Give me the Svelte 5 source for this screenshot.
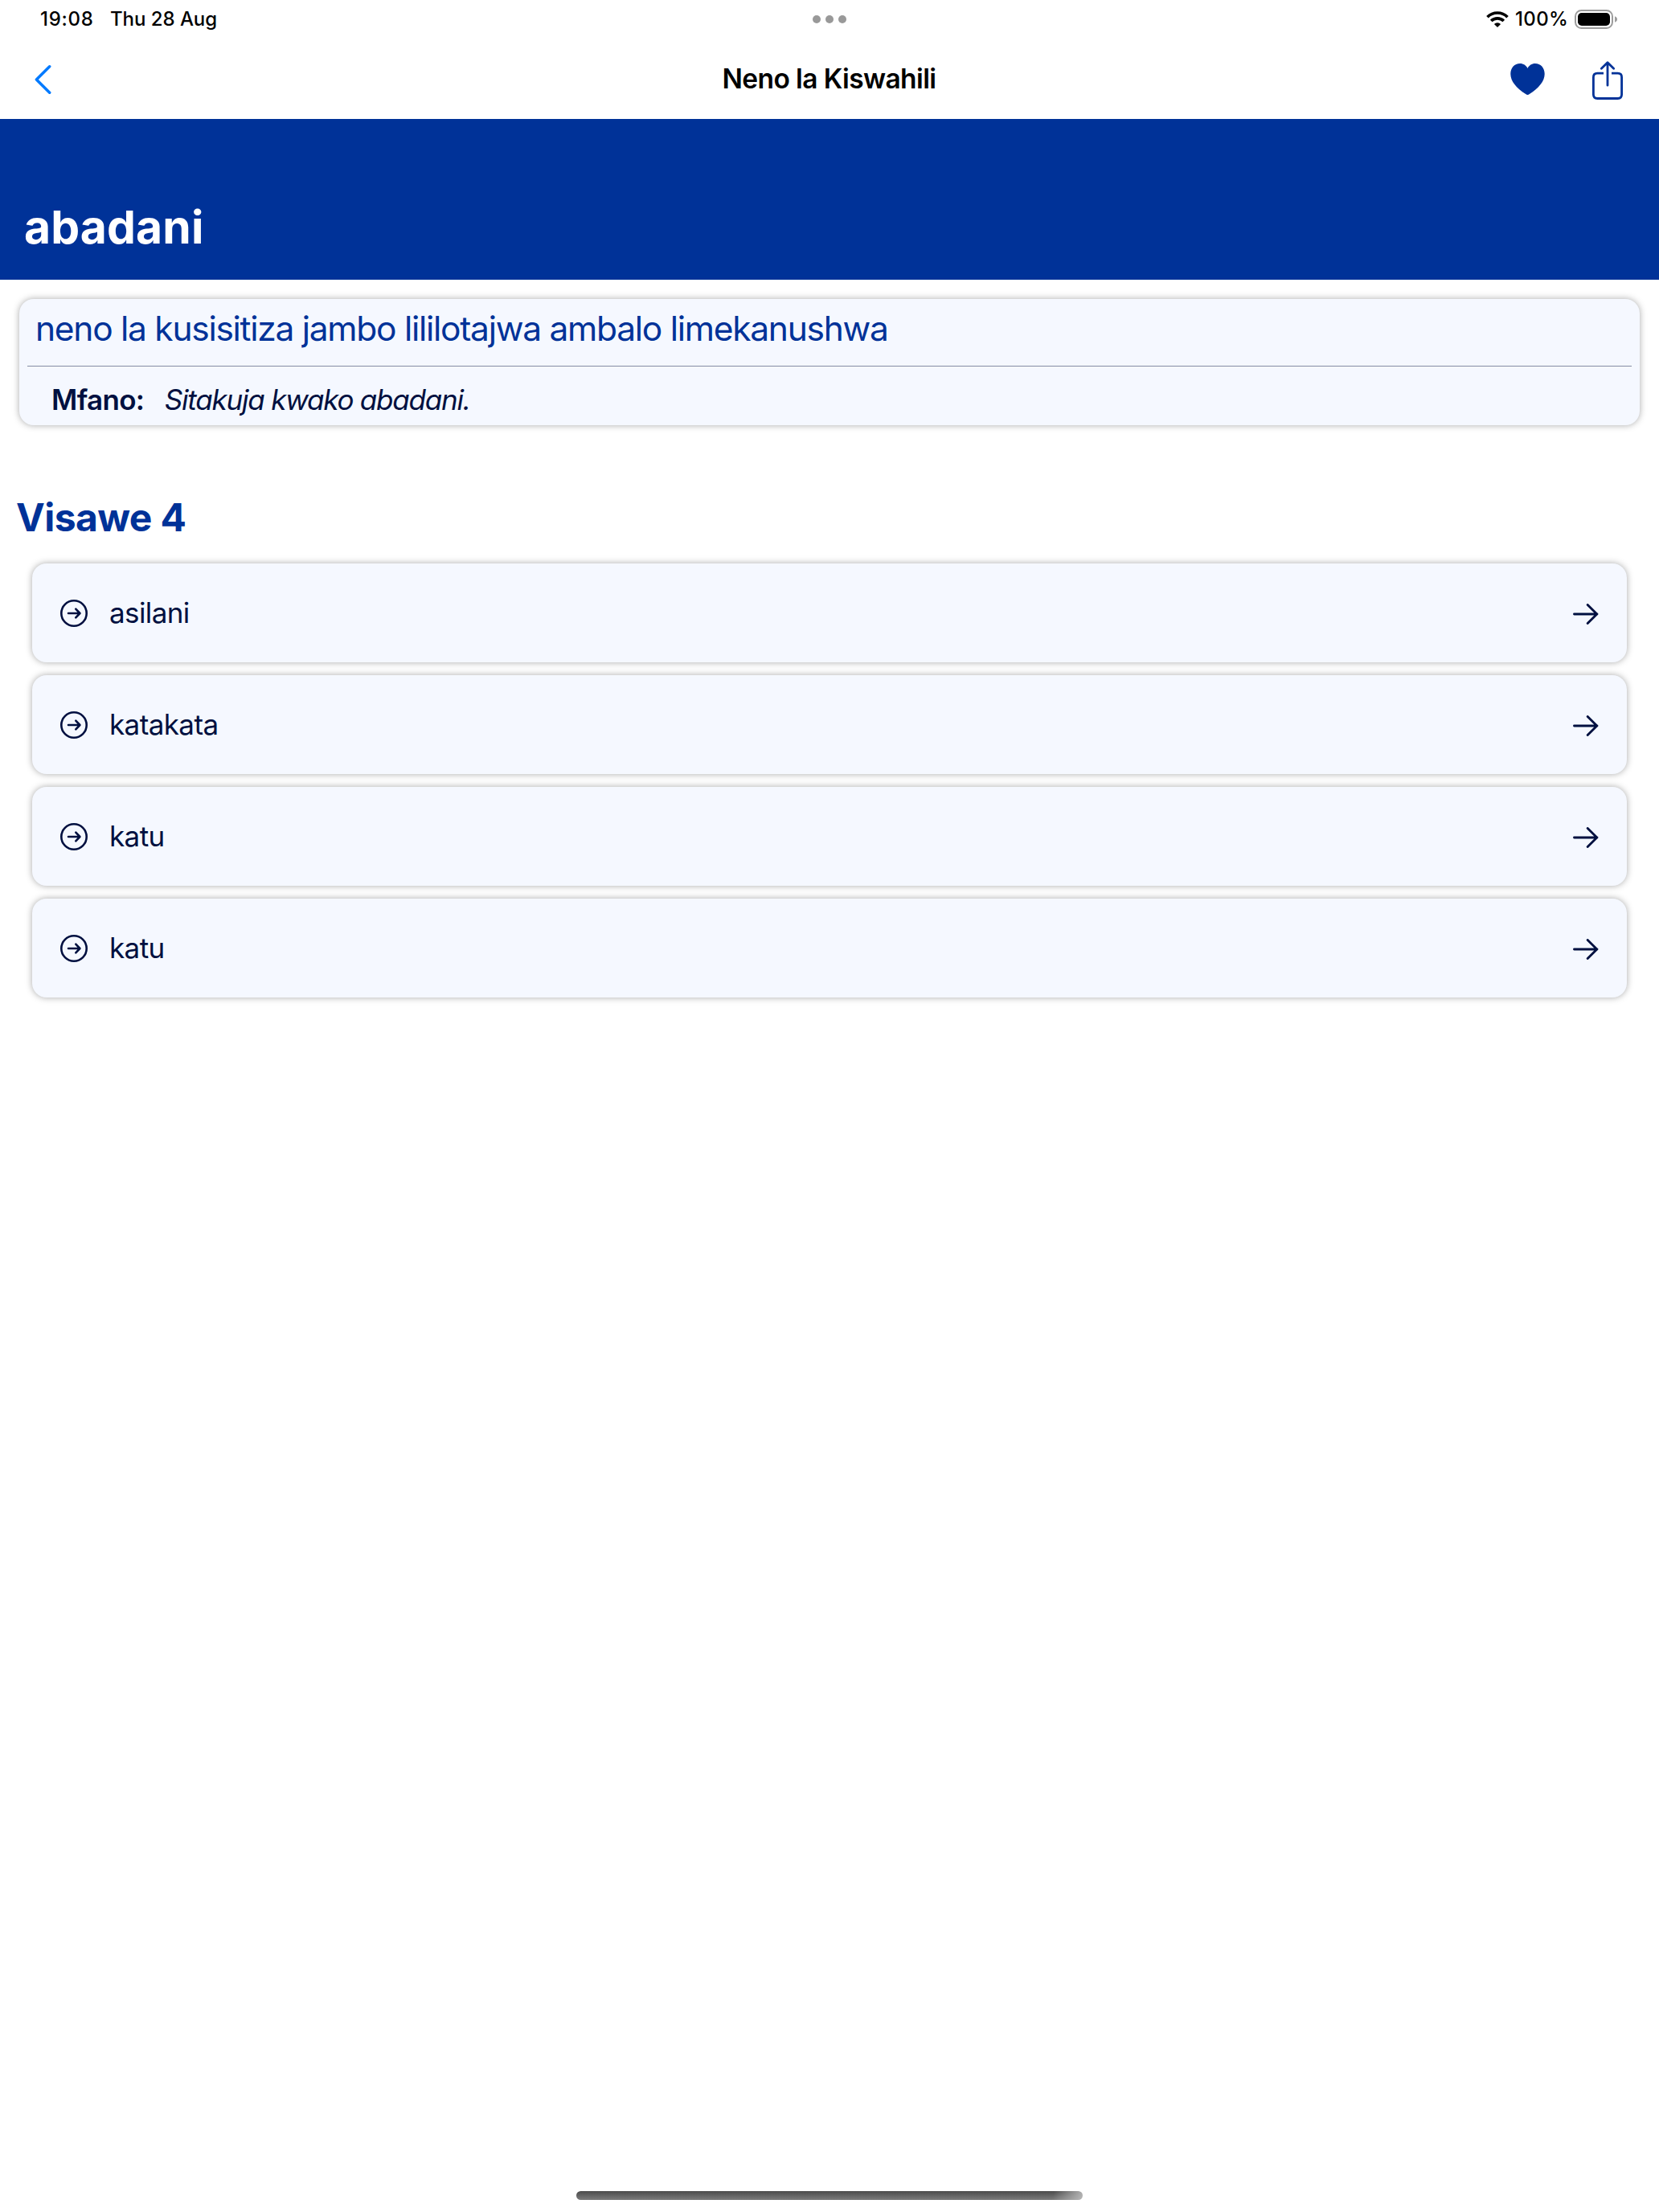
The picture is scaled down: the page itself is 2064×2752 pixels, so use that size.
<script>
  const title = 'Neno la Kiswahili';
  const word = 'abadani';
  const meaning = 'neno la kusisitiza jambo lililotajwa ambalo limekanushwa';
  const example = 'Sitakuja kwako abadani.';
  const synonyms = ['asilani', 'katakata', 'katu', 'katu'];
</script>

<div class="screen">
  <div class="status">
    <div class="left">
      <span class="time">19:08</span>
      <span class="date">Thu 28 Aug</span>
    </div>
    <div class="dots"><i></i><i></i><i></i></div>
    <div class="right">
      <svg class="wifi" viewBox="0 0 28 20" aria-hidden="true">
        <g fill="none" stroke="#000" stroke-width="3.7">
          <path d="M1.5 7.2A17.6 17.6 0 0 1 26.5 7.2" />
          <path d="M6.2 12A11.2 11.2 0 0 1 21.8 12" />
        </g>
        <path d="M14 20 9.9 15.9A5.9 5.9 0 0 1 18.1 15.9Z" fill="#000" />
      </svg>
      <span class="percent">100%</span>
      <svg class="battery" viewBox="0 0 54 24" aria-hidden="true">
        <rect x="1" y="1" width="46" height="22" rx="7.4" fill="none" stroke="#9c9c9c" stroke-width="2" />
        <rect x="4" y="4" width="40" height="16" rx="4.8" fill="#000" />
        <path d="M50 8.2C52 9 53 10.3 53 12S52 15 50 15.8Z" fill="#9c9c9c" />
      </svg>
    </div>
  </div>

  <nav>
    <svg class="back" viewBox="0 0 22 38" role="img" aria-label="Rudi">
      <path d="M19.7 2.8 3.4 19 19.7 35.2" fill="none" stroke="#007aff" stroke-width="3.5" stroke-linecap="round" stroke-linejoin="round" />
    </svg>
    <h1>{title}</h1>
    <div class="actions">
      <svg class="heart" viewBox="0 0 43 39" aria-hidden="true">
        <path d="M21.5 39C20.7 39 20 38.6 19.2 38.1C7.5 30.7.3 21.9.3 13C.3 5.3 5.4 0 12.1 0C16.2 0 19.6 2.2 21.5 5.9C23.4 2.2 26.8 0 30.9 0C37.6 0 42.7 5.3 42.7 13C42.7 21.9 35.5 30.7 23.8 38.1C23 38.6 22.3 39 21.5 39Z" fill="#003298" />
      </svg>
      <svg class="share" viewBox="0 0 38 48" aria-hidden="true">
        <g fill="none" stroke="#003298" stroke-width="2.8" stroke-linecap="round" stroke-linejoin="round">
          <path d="M14 15.2H6.3Q1.4 15.2 1.4 20V41.6Q1.4 46.5 6.3 46.5H31.7Q36.6 46.5 36.6 41.6V20Q36.6 15.2 31.7 15.2H24" stroke-linecap="butt" />
          <path d="M19 2V30.2M11.4 9.2 19 1.8 26.6 9.2" />
        </g>
      </svg>
    </div>
  </nav>

  <header><h2>{word}</h2></header>

  <main>
    <section class="card definition">
      <p class="meaning">{meaning}</p>
      <div class="example">
        <strong>Mfano:</strong>
        <em>{example}</em>
      </div>
    </section>

    <h3>Visawe {synonyms.length}</h3>
    <ul>
      {#each synonyms as item}
        <li class="card">
          <svg class="bullet" viewBox="0 0 36 36" aria-hidden="true">
            <g fill="none" stroke="#001040" stroke-width="2.6" stroke-linecap="round" stroke-linejoin="round">
              <circle cx="18" cy="18" r="15.7" />
              <path d="M11 18H25.2M20.3 12.6 25.4 18 20.3 23.4" />
            </g>
          </svg>
          <span>{item}</span>
          <svg class="arrow" viewBox="0 0 32 26" aria-hidden="true">
            <path d="M1.5 13H30M18.2 1.5 29.8 13 18.2 24.5" fill="none" stroke="#001040" stroke-width="2.9" stroke-linecap="round" stroke-linejoin="round" />
          </svg>
        </li>
      {/each}
    </ul>
  </main>

  <div class="home"></div>
</div>

<style>
  :global(body) { background: #fff; }
  .screen {
    box-sizing: border-box;
    width: 2064px;
    height: 2752px;
    display: flex;
    flex-direction: column;
    overflow: hidden;
    background: #fff;
    font-family: Inter, "Liberation Sans", sans-serif;
    color: #001040;
  }
  h1, h2, h3, p, ul { margin: 0; padding: 0; }
  svg { display: block; flex: none; }

  .status {
    height: 48px;
    display: grid;
    grid-template-columns: 1fr auto 1fr;
    padding: 0 51px 0 50px;
    font-size: 24px;
    font-weight: 500;
    line-height: 48px;
    color: #000;
  }
  .left { display: flex; }
  .time { width: 87px; letter-spacing: 0.7px; }
  .date { letter-spacing: -0.05px; }
  .dots { display: flex; align-items: center; gap: 6px; }
  .dots i { width: 10px; height: 10px; border-radius: 50%; background: #999; }
  .right { display: flex; justify-content: flex-end; }
  .wifi { width: 28px; height: 20px; margin-top: 14px; }
  .percent { margin-left: 8px; width: 74px; letter-spacing: 0.35px; }
  .battery { width: 54px; height: 24px; margin-top: 12px; }

  nav {
    height: 100px;
    display: grid;
    grid-template-columns: 1fr auto 1fr;
    align-items: center;
    padding: 0 45px 0 42px;
  }
  .back { width: 22px; height: 38px; margin-top: 2px; }
  h1 {
    padding-left: 1px;
    font-size: 33.5px;
    font-weight: 600;
    letter-spacing: -0.6px;
    line-height: 100px;
    color: #000;
  }
  h1 { margin-left: 1px; }
  .actions { display: flex; justify-content: flex-end; align-items: center; gap: 59px; }
  .heart { width: 43px; height: 39px; margin-top: 1px; }
  .share { width: 38px; height: 48px; margin-top: 4px; }

  header {
    height: 200px;
    box-sizing: border-box;
    display: flex;
    align-items: flex-end;
    padding: 0 30px 30px;
    background: #003298;
  }
  h2 { font-size: 57px; font-weight: 700; letter-spacing: 0.12px; line-height: 70px; color: #fff; }

  main { flex: 1; padding-top: 24px; }
  .card {
    background: #f5f8ff;
    border-radius: 18px;
    box-shadow: 0 0 8px rgba(0, 0, 0, 0.34);
  }
  .definition { margin: 0 24px; height: 157px; }
  .meaning {
    padding: 0 20px;
    font-size: 42.5px;
    letter-spacing: -1.274px;
    line-height: 73px;
    color: #003298;
  }
  .example {
    margin: 10px 10px 0;
    padding: 10px 30px 0;
    border-top: 1px solid #858da3;
    display: flex;
    gap: 25.5px;
    font-size: 35px;
    line-height: 63px;
  }
  strong { font-weight: 600; letter-spacing: -0.65px; }
  em { font-style: italic; letter-spacing: -1.219px; }

  h3 {
    margin: 84px 0 27px 20px;
    font-size: 48px;
    font-weight: 700;
    letter-spacing: -0.6px;
    line-height: 61px;
    color: #003298;
  }
  ul { display: flex; flex-direction: column; gap: 16px; margin: 0 40px; list-style: none; }
  li {
    height: 123px;
    display: flex;
    align-items: center;
    padding: 0 35px 0 34px;
    font-size: 35px;
    letter-spacing: -0.6px;
  }
  .bullet { width: 36px; height: 36px; }
  li span { flex: 1; margin-left: 26px; padding-bottom: 2px; }
  .arrow { width: 32px; height: 26px; margin-top: 2px; }

  .home {
    align-self: center;
    width: 630px;
    height: 11px;
    margin-bottom: 15px;
    border-radius: 6px;
    background:
      linear-gradient(100deg, rgba(190, 190, 190, 0) 94%, rgba(190, 190, 190, 0.9) 100%),
      linear-gradient(#4a4a4a, #7c7c7c);
  }
</style>
